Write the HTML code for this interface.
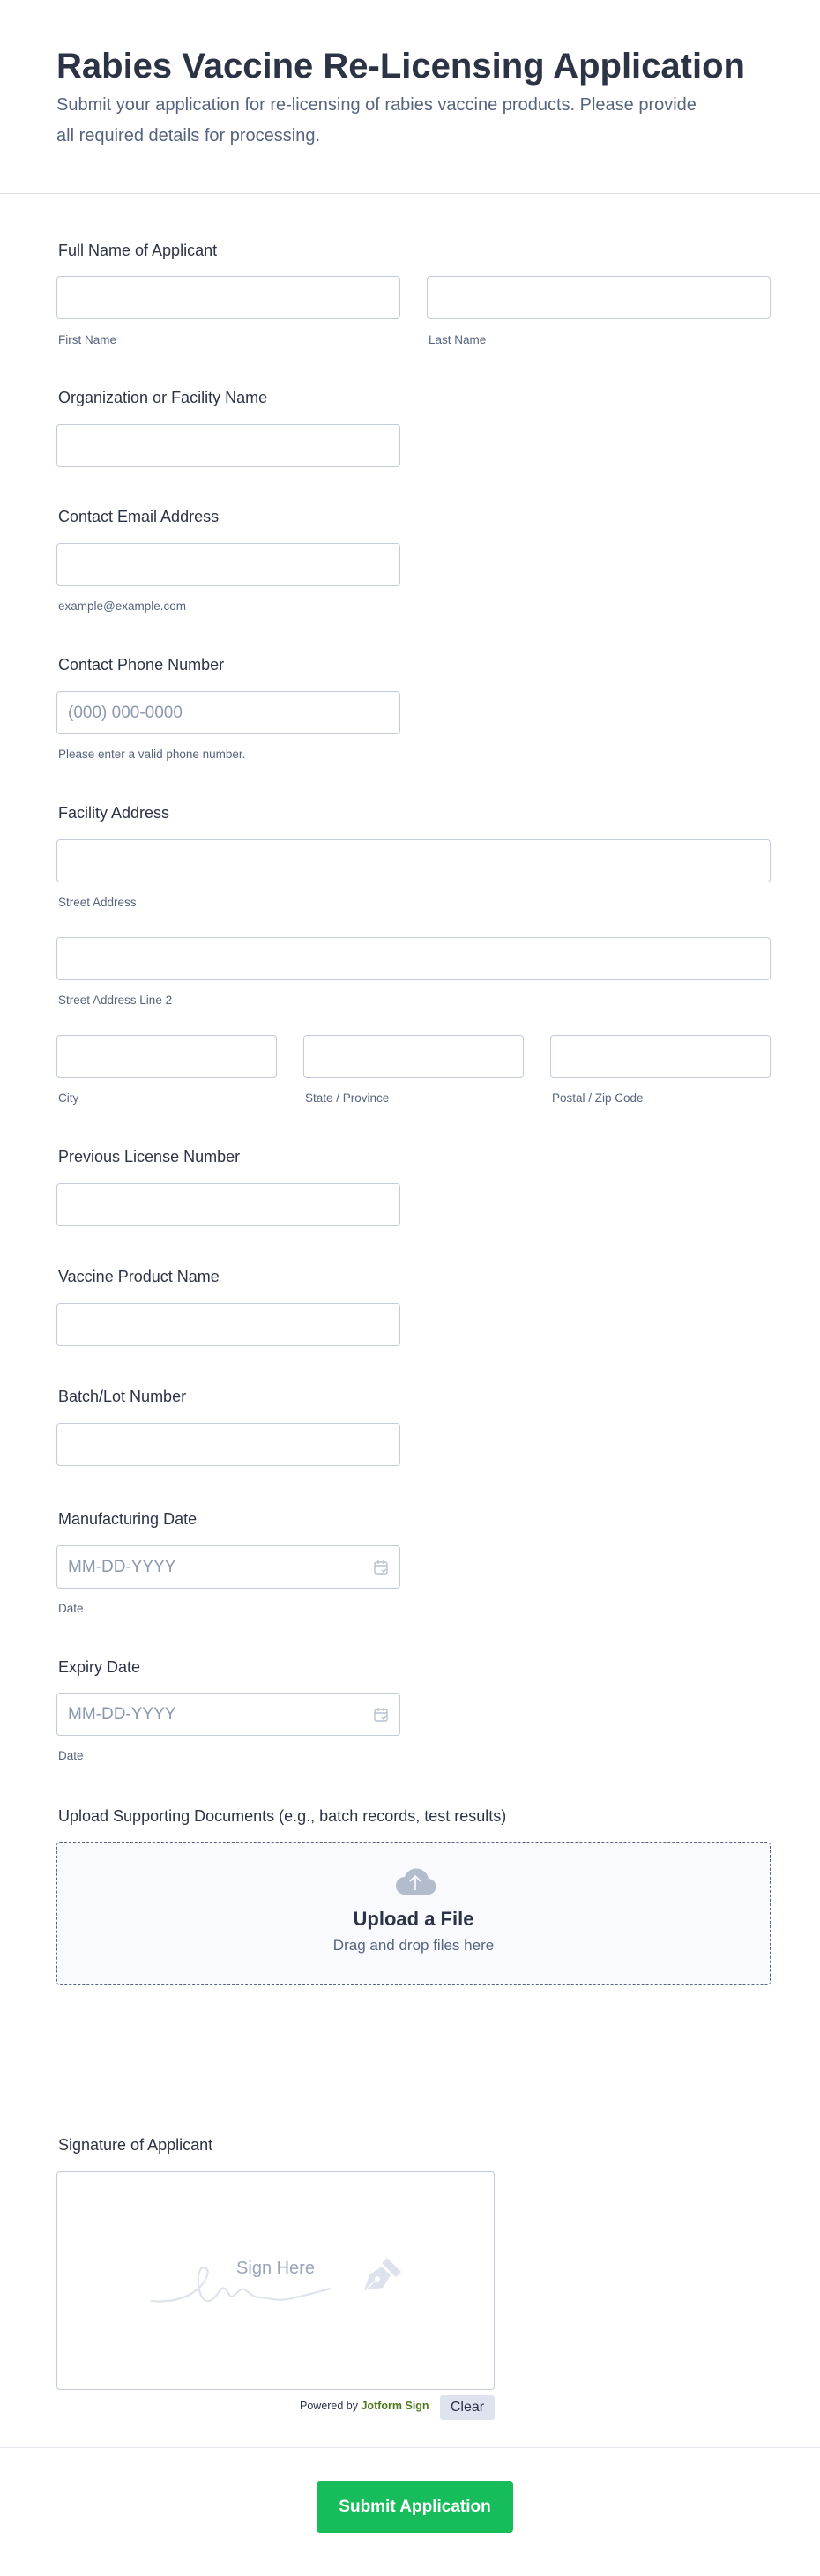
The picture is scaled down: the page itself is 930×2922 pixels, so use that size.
<!DOCTYPE html>
<html><head><meta charset="utf-8"><style>
*{box-sizing:border-box;margin:0;padding:0}
body{width:930px;height:2922px;position:relative;background:#fff;font-family:"Liberation Sans",Arial,sans-serif;color:#2c3345;overflow:hidden}
.a{position:absolute}
.t{position:absolute;white-space:nowrap}
.lb{font-size:18px;color:#2c3345;line-height:22px;left:66px}
.sl{font-size:13.5px;color:#57647e;line-height:16px}
.in{position:absolute;height:49px;border:1px solid #c3cad8;border-radius:4px;background:#fff}
.ph{position:absolute;left:12px;top:13px;font-size:19px;color:#8d98ae;white-space:nowrap}
</style></head><body>
<div class="t" style="left:64px;top:50px;font-size:40px;font-weight:bold;color:#2c3345;line-height:50px;letter-spacing:0px">Rabies Vaccine Re-Licensing Application</div>
<div class="t" style="left:64px;top:102px;font-size:20px;color:#57647e;line-height:35px">Submit your application for re-licensing of rabies vaccine products. Please provide<br>all required details for processing.</div>
<div class="a" style="left:0;top:219px;width:930px;height:1px;background:#dfe3eb"></div>

<div class="t lb" style="top:273px">Full Name of Applicant</div>
<div class="in" style="left:64px;top:313px;width:390px"></div>
<div class="in" style="left:484px;top:313px;width:390px"></div>
<div class="t sl" style="left:66px;top:378px">First Name</div>
<div class="t sl" style="left:486px;top:378px">Last Name</div>

<div class="t lb" style="top:440px">Organization or Facility Name</div>
<div class="in" style="left:64px;top:481px;width:390px"></div>

<div class="t lb" style="top:575px">Contact Email Address</div>
<div class="in" style="left:64px;top:616px;width:390px"></div>
<div class="t sl" style="left:66px;top:680px">example@example.com</div>

<div class="t lb" style="top:743px">Contact Phone Number</div>
<div class="in" style="left:64px;top:784px;width:390px"><span class="ph">(000) 000-0000</span></div>
<div class="t sl" style="left:66px;top:848px">Please enter a valid phone number.</div>

<div class="t lb" style="top:911px">Facility Address</div>
<div class="in" style="left:64px;top:952px;width:810px"></div>
<div class="t sl" style="left:66px;top:1016px">Street Address</div>
<div class="in" style="left:64px;top:1063px;width:810px"></div>
<div class="t sl" style="left:66px;top:1127px">Street Address Line 2</div>
<div class="in" style="left:64px;top:1174px;width:250px"></div>
<div class="in" style="left:344px;top:1174px;width:250px"></div>
<div class="in" style="left:624px;top:1174px;width:250px"></div>
<div class="t sl" style="left:66px;top:1238px">City</div>
<div class="t sl" style="left:346px;top:1238px">State / Province</div>
<div class="t sl" style="left:626px;top:1238px">Postal / Zip Code</div>

<div class="t lb" style="top:1301px">Previous License Number</div>
<div class="in" style="left:64px;top:1342px;width:390px"></div>

<div class="t lb" style="top:1437px">Vaccine Product Name</div>
<div class="in" style="left:64px;top:1478px;width:390px"></div>

<div class="t lb" style="top:1573px">Batch/Lot Number</div>
<div class="in" style="left:64px;top:1614px;width:390px"></div>

<div class="t lb" style="top:1712px">Manufacturing Date</div>
<div class="in" style="left:64px;top:1753px;width:390px"><span class="ph">MM-DD-YYYY</span>
<svg class="a" style="right:12px;top:15px" width="18" height="18" viewBox="0 0 18 18" fill="none" stroke="#b8c0cf" stroke-width="1.4"><rect x="2" y="3" width="14" height="13" rx="2"/><path d="M2 7h14M6 1v4M12 1v4M10 12l2 2 3-3"/></svg></div>
<div class="t sl" style="left:66px;top:1817px">Date</div>

<div class="t lb" style="top:1880px">Expiry Date</div>
<div class="in" style="left:64px;top:1920px;width:390px"><span class="ph">MM-DD-YYYY</span>
<svg class="a" style="right:12px;top:15px" width="18" height="18" viewBox="0 0 18 18" fill="none" stroke="#b8c0cf" stroke-width="1.4"><rect x="2" y="3" width="14" height="13" rx="2"/><path d="M2 7h14M6 1v4M12 1v4M10 12l2 2 3-3"/></svg></div>
<div class="t sl" style="left:66px;top:1984px">Date</div>

<div class="t lb" style="top:2049px">Upload Supporting Documents (e.g., batch records, test results)</div>
<div class="a" style="left:64px;top:2089px;width:810px;height:163px;border:1px dashed #57647e;border-radius:4px;background:#f9fafe">
<svg class="a" style="left:382px;top:26px" width="48" height="34" viewBox="0 0 48 34"><path d="M12 33h26a9 9 0 0 0 1-18 14 14 0 0 0-27-2 10 10 0 0 0 0 20z" fill="#b3bccd"/><path d="M24 28V12M18 18l6-6 6 6" stroke="#fff" stroke-width="1.6" fill="none"/></svg>
<div class="t" style="left:0;width:808px;text-align:center;top:74px;font-size:22px;font-weight:bold;color:#2c3345">Upload a File</div>
<div class="t" style="left:0;width:808px;text-align:center;top:107px;font-size:17px;color:#57647e">Drag and drop files here</div>
</div>

<div class="t lb" style="top:2422px">Signature of Applicant</div>
<div class="a" style="left:64px;top:2463px;width:497px;height:248px;border:1px solid #c3cad8;border-radius:4px">
<div class="t" style="left:0;width:495px;text-align:center;top:98px;font-size:20px;color:#9aa4bb">Sign Here</div>
<svg class="a" style="left:100px;top:90px" width="300" height="70" viewBox="0 0 300 70" fill="none"><path d="M6 56c20 2 40-2 54-14 8-8 16-22 6-24-10 0-8 40 6 38 10-2 12-18 18-14 6 4 4 12 10 8 6-4 8-10 14-6 6 4 8 8 16 8 10 0 20 6 40 0 20-4 30-8 40-10" stroke="#dde2ec" stroke-width="2.2"/><path d="M248 44l6-18 14-9 10 10-9 14z" fill="#dde2ec"/><circle cx="263" cy="31" r="3" fill="#fff"/><path d="M251 42l10-9" stroke="#fff" stroke-width="1.2"/><path d="M268 13l6-6 16 16-6 6z" fill="#dde2ec"/></svg>
</div>
<div class="t" style="left:340px;top:2722px;font-size:12.5px;color:#2c3345">Powered by <b style="color:#4e7a1d">Jotform Sign</b></div>
<div class="a" style="left:499px;top:2717px;width:62px;height:28px;background:#dfe3f0;border-radius:3px;font-size:16px;color:#2c3345;text-align:center;line-height:28px">Clear</div>

<div class="a" style="left:0;top:2776px;width:930px;height:1px;background:#e6e9ef"></div>
<div class="a" style="left:359px;top:2814px;width:223px;height:59px;background:#18bd5b;border-radius:4px;color:#fff;font-size:19px;font-weight:bold;text-align:center;line-height:59px">Submit Application</div>
</body></html>
